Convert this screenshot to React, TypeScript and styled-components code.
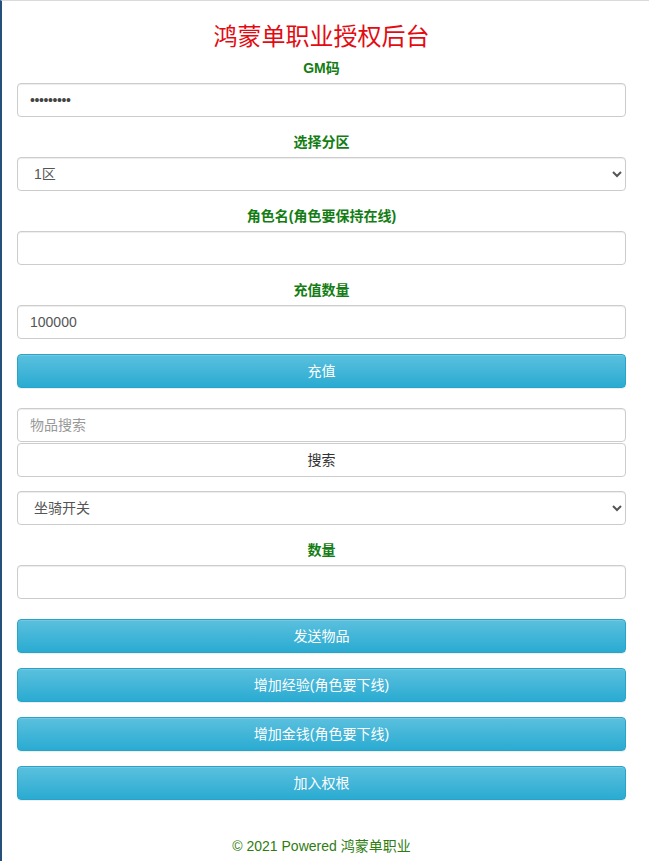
import React from 'react'
import styled, { createGlobalStyle } from 'styled-components'

const GlobalStyle = createGlobalStyle`
  html, body {
    margin: 0;
    padding: 0;
    background: #fff;
  }
  body {
    font-family: "Liberation Sans", Arial, "Noto Sans CJK SC", sans-serif;
    font-size: 14px;
    line-height: 20px;
    color: #333;
  }
`

const Page = styled.div`
  min-height: 861px;
  border-left: 2px solid #25507a;
  border-top: 1px solid #dadada;
  box-sizing: border-box;
`

const Container = styled.div`
  margin: 0 23px 0 15px;
`

const Title = styled.h2`
  margin: 21px 0 10px;
  text-align: center;
  font-size: 24px;
  line-height: 26px;
  font-weight: normal;
  color: #e30b12;
  font-family: "Noto Sans CJK SC", sans-serif;
`

const FormGroup = styled.div`
  margin-bottom: 15px;
  text-align: center;
`

const Label = styled.label`
  display: inline-block;
  margin-bottom: 5px;
  font-weight: bold;
  color: #137d13;
  font-size: 14px;
  line-height: 20px;
`

const controlStyles = `
  display: block;
  width: 100%;
  height: 34px;
  padding: 6px 12px;
  box-sizing: border-box;
  font-family: "Liberation Sans", Arial, "Noto Sans CJK SC", sans-serif;
  font-size: 14px;
  line-height: 20px;
  color: #555;
  background: #fff;
  border: 1px solid #ccc;
  border-radius: 4px;
  box-shadow: inset 0 1px 1px rgba(0, 0, 0, 0.075);
  text-align: left;
  outline: none;
  &::placeholder {
    color: #999;
  }
`

const Input = styled.input`
  ${controlStyles}
  &[type='password'] {
    letter-spacing: -0.4px;
    color: #444;
  }
`

const Select = styled.select`
  ${controlStyles}
  padding: 6px 8px 6px 12px;
`

const Button = styled.button<{ $variant?: 'info' | 'plain'; $gap?: number }>`
  display: block;
  width: 100%;
  height: 34px;
  margin-bottom: ${p => p.$gap ?? 15}px;
  padding: 6px 12px;
  box-sizing: border-box;
  font-family: "Liberation Sans", Arial, "Noto Sans CJK SC", sans-serif;
  font-size: 14px;
  line-height: 20px;
  border-radius: 4px;
  cursor: pointer;
  color: ${p => (p.$variant === 'plain' ? '#333' : '#fff')};
  background: ${p =>
    p.$variant === 'plain' ? '#fff' : 'linear-gradient(to bottom, #5bc0de 0%, #2aabd2 100%)'};
  border: 1px solid ${p => (p.$variant === 'plain' ? '#ccc' : '#28a4c9')};
  box-shadow: ${p =>
    p.$variant === 'plain'
      ? 'none'
      : 'inset 0 1px 0 rgba(255,255,255,0.15), 0 1px 1px rgba(0,0,0,0.075)'};
`

const SearchBlock = styled.div`
  margin-top: 5px;
  margin-bottom: 14px;
  display: flex;
  flex-direction: column;
  gap: 1px;
`

const Footer = styled.footer`
  margin-top: 36px;
  text-align: center;
  color: #2e7d10;
  font-size: 14px;
  line-height: 20px;
`

export default function App() {
  return (
    <>
      <GlobalStyle />
      <Page>
        <Container>
          <Title>鸿蒙单职业授权后台</Title>

          <FormGroup>
            <Label>GM码</Label>
            <Input type="password" defaultValue="123456789" />
          </FormGroup>

          <FormGroup>
            <Label>选择分区</Label>
            <Select defaultValue="1">
              <option value="1">1区</option>
              <option value="2">2区</option>
            </Select>
          </FormGroup>

          <FormGroup>
            <Label>角色名(角色要保持在线)</Label>
            <Input type="text" />
          </FormGroup>

          <FormGroup>
            <Label>充值数量</Label>
            <Input type="text" defaultValue="100000" />
          </FormGroup>

          <Button $gap={20}>充值</Button>

          <SearchBlock>
            <Input type="text" placeholder="物品搜索" />
            <Button $variant="plain" $gap={0}>搜索</Button>
          </SearchBlock>

          <FormGroup>
            <Select defaultValue="mount">
              <option value="mount">坐骑开关</option>
            </Select>
          </FormGroup>

          <FormGroup>
            <Label>数量</Label>
            <Input type="text" />
          </FormGroup>

          <Button $gap={15} style={{ marginTop: 20 }}>发送物品</Button>
          <Button>增加经验(角色要下线)</Button>
          <Button>增加金钱(角色要下线)</Button>
          <Button $gap={0}>加入权根</Button>

          <Footer>© 2021 Powered 鸿蒙单职业</Footer>
        </Container>
      </Page>
    </>
  )
}
